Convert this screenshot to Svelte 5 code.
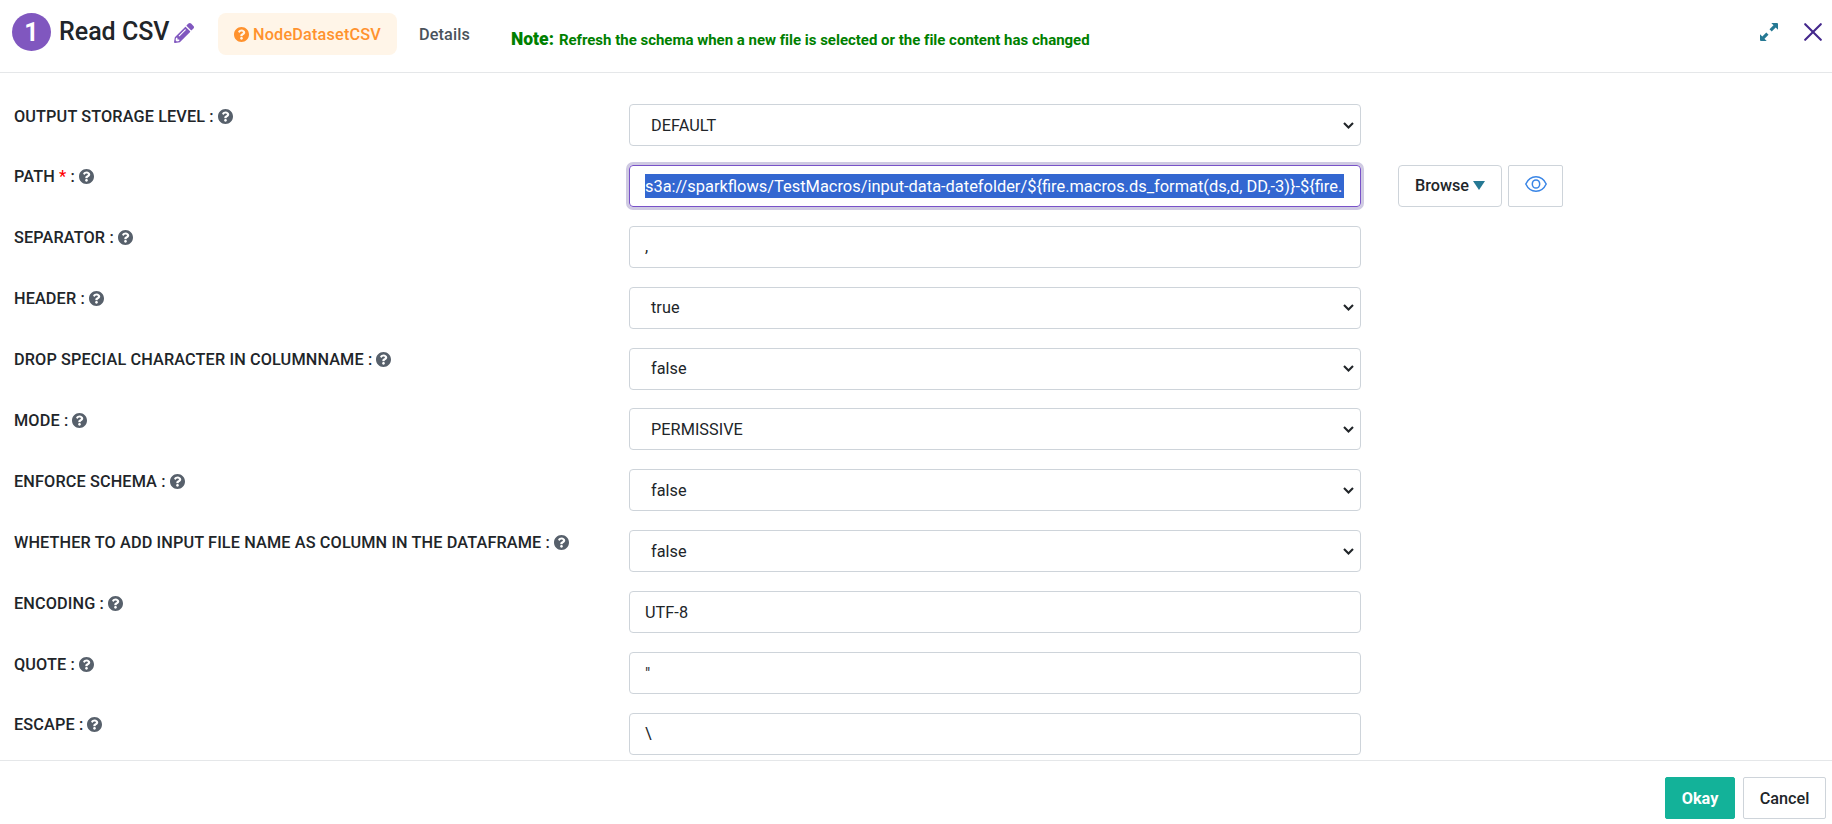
<script>
  const fields = [
    { label: 'OUTPUT STORAGE LEVEL', value: 'DEFAULT', type: 'select' },
    { label: 'PATH', value: 's3a://sparkflows/TestMacros/input-data-datefolder/${fire.macros.ds_format(ds,d, DD,-3)}-${fire.', type: 'path', required: true },
    { label: 'SEPARATOR', value: ',', type: 'text' },
    { label: 'HEADER', value: 'true', type: 'select' },
    { label: 'DROP SPECIAL CHARACTER IN COLUMNNAME', value: 'false', type: 'select' },
    { label: 'MODE', value: 'PERMISSIVE', type: 'select' },
    { label: 'ENFORCE SCHEMA', value: 'false', type: 'select' },
    { label: 'WHETHER TO ADD INPUT FILE NAME AS COLUMN IN THE DATAFRAME', value: 'false', type: 'select' },
    { label: 'ENCODING', value: 'UTF-8', type: 'text' },
    { label: 'QUOTE', value: '"', type: 'text' },
    { label: 'ESCAPE', value: '\\', type: 'text' }
  ];
</script>

{#snippet help()}
  <svg class="help" viewBox="8 8 496 496" aria-hidden="true"><path fill="currentColor" d="M504 256c0 136.997-111.043 248-248 248S8 392.997 8 256C8 119.083 119.043 8 256 8s248 111.083 248 248zM262.655 90c-54.497 0-89.255 22.957-116.549 63.758-3.536 5.286-2.353 12.415 2.715 16.258l34.699 26.31c5.205 3.947 12.621 3.008 16.665-2.122 17.864-22.658 30.113-35.797 57.303-35.797 20.429 0 45.698 13.148 45.698 32.958 0 14.976-12.363 22.667-32.534 33.976C247.128 238.528 216 254.941 216 296v4c0 6.627 5.373 12 12 12h56c6.627 0 12-5.373 12-12v-1.333c0-28.462 83.186-29.647 83.186-106.667 0-58.002-60.165-102-116.531-102zM256 338c-25.365 0-46 20.635-46 46 0 25.364 20.635 46 46 46s46-20.636 46-46c0-25.365-20.635-46-46-46z"/></svg>
{/snippet}

<div class="dialog">
  <header>
    <span class="number">1</span>
    <h1>Read CSV</h1>
    <svg class="pencil" viewBox="0 0 512 512" aria-hidden="true"><path fill="currentColor" d="M497.900 142.100l-46.100 46.100c-4.700 4.700-12.300 4.700-17 0l-111-111c-4.700-4.700-4.700-12.300 0-17l46.100-46.100c18.700-18.700 49.100-18.700 67.900 0l60.100 60.100c18.800 18.700 18.800 49.100 0 67.900zM284.200 99.800L21.600 362.400.4 483.900c-2.900 16.400 11.400 30.600 27.800 27.800l121.500-21.300 262.600-262.600c4.700-4.700 4.700-12.300 0-17l-111-111c-4.800-4.700-12.400-4.700-17.100 0zM124.100 339.900c-5.500-5.500-5.500-14.300 0-19.800l154-154c5.500-5.500 14.300-5.500 19.800 0s5.500 14.300 0 19.800l-154 154c-5.500 5.500-14.300 5.500-19.800 0zM88 424h48v36.300l-64.500 11.300-31.100-31.100L51.700 376H88v48z"/></svg>
    <div class="tab active">{@render help()}<span>NodeDatasetCSV</span></div>
    <div class="details">Details</div>
    <p class="note"><b>Note:</b><span>Refresh the schema when a new file is selected or the file content has changed</span></p>
    <svg class="expand" viewBox="0 0 18 18" aria-hidden="true"><path fill="currentColor" d="M11.300 0H17q1 0 1 1v5.700L15.700 4.500 11.700 8.500 9.500 6.300 13.500 2.300zM6.700 18H1q-1 0-1-1v-5.700l2.300 2.200 4-4 2.200 2.200-4 4z"/></svg>
    <svg class="close" viewBox="0 0 18 18" aria-hidden="true"><path stroke="currentColor" stroke-width="2.100" stroke-linecap="round" d="M1.200 1.200l15.600 15.600M16.800 1.200L1.200 16.800"/></svg>
  </header>

  <main>
    {#each fields as f}
      <div class="row">
        <div class="label"><span>{f.label}{#if f.required}<i>&nbsp;*</i>{/if} :</span>{@render help()}</div>
        <div class="field {f.type}">
          <span class="value">{f.value}</span>
          {#if f.type === 'select'}
            <svg class="caret" viewBox="0 0 11 7" aria-hidden="true"><path d="M1 1l4.500 4.500L10 1" fill="none" stroke="currentColor" stroke-width="2.100"/></svg>
          {/if}
        </div>
        {#if f.type === 'path'}
          <button class="browse"><span>Browse</span><i class="down"></i></button>
          <button class="view" aria-label="View">
            <svg viewBox="0 0 22 16" fill="none" stroke="currentColor" stroke-width="1.500" aria-hidden="true"><path d="M.8 8C3 3.300 6.600.8 11 .8S19 3.300 21.200 8C19 12.700 15.400 15.200 11 15.200S3 12.700.8 8z"/><ellipse cx="11" cy="8" rx="3.700" ry="4.100"/></svg>
          </button>
        {/if}
      </div>
    {/each}
  </main>

  <footer>
    <button class="okay">Okay</button>
    <button class="cancel">Cancel</button>
  </footer>
</div>

<style>
  .dialog {
    display: flex;
    flex-direction: column;
    height: 824px;
    overflow: hidden;
    background: #fff;
    color: #212529;
    font-family: Roboto, sans-serif;
    font-size: 16.250px;
  }
  svg { display: block; flex: none; }
  header {
    box-sizing: border-box;
    flex: none;
    display: flex;
    align-items: flex-start;
    height: 73px;
    padding: 13px 10px 0 12px;
    border-bottom: 1px solid #e5e7e9;
  }
  .number {
    width: 39px;
    height: 38px;
    border-radius: 50%;
    background: #8057bf;
    color: #fff;
    font-size: 25px;
    font-weight: 700;
    line-height: 39px;
    text-align: center;
  }
  h1 {
    width: 113px;
    margin: 0 0 0 8px;
    font-size: 25px;
    font-weight: 500;
    line-height: 38px;
    white-space: nowrap;
  }
  .pencil { width: 20px; height: 20px; margin: 10px 1px 0 2px; color: #8057bf; }
  .help { width: 15px; height: 15px; color: #57606b; }
  .tab {
    box-sizing: border-box;
    display: flex;
    align-items: center;
    gap: 4px;
    width: 179px;
    height: 42px;
    margin-left: 23px;
    padding-left: 16px;
    border-radius: 8px;
    background: #fff5e8;
    color: #ff922e;
    font-weight: 500;
    letter-spacing: 0.170px;
  }
  .tab .help { color: #ff922e; }
  .details {
    width: 92px;
    margin-left: 22px;
    color: #4b535b;
    font-weight: 500;
    letter-spacing: 0.120px;
    line-height: 43px;
  }
  .note {
    flex: 1;
    display: flex;
    align-items: baseline;
    gap: 5px;
    margin: 13px 0 0;
    color: #008000;
    font-size: 15px;
    font-weight: 700;
    letter-spacing: -0.010px;
    line-height: 26px;
    white-space: nowrap;
  }
  .note b { font-size: 17.500px; }
  .expand { width: 18px; height: 18px; margin-top: 10px; color: #267994; }
  .close { width: 18px; height: 18px; margin: 10px 0 0 26px; color: #44288c; }

  main { flex: 1; min-height: 0; overflow: hidden; padding: 31px 0 0 14px; }
  .row { display: flex; align-items: flex-start; height: 60.900px; }
  .label {
    display: flex;
    align-items: center;
    gap: 4px;
    width: 615px;
    height: 24px;
    font-weight: 500;
    letter-spacing: 0.130px;
    white-space: nowrap;
  }
  .label i { color: #f00; font-style: normal; }
  .field {
    box-sizing: border-box;
    display: flex;
    align-items: center;
    width: 732px;
    height: 42px;
    padding: 0 15px;
    border: 1px solid #ced4da;
    border-radius: 4px;
    letter-spacing: 0.050px;
  }
  .field.select { justify-content: space-between; padding: 0 6px 0 21px; }
  .field.path { padding-right: 16px; border-color: #7952c8; box-shadow: 0 0 0 3px #cfcae2; }
  .path .value {
    flex: 1;
    height: 24px;
    background: #3367d1;
    color: #fff;
    font-size: 16.420px;
    letter-spacing: normal;
    line-height: 25px;
    white-space: nowrap;
  }
  .caret { width: 11px; height: 7px; }
  button {
    box-sizing: border-box;
    display: flex;
    align-items: center;
    justify-content: center;
    height: 42px;
    padding: 0;
    border: 1px solid #ced4da;
    border-radius: 4px;
    background: #fff;
    color: #212529;
    font: 500 16.250px Roboto, sans-serif;
  }
  .browse { width: 104px; margin-left: 37px; gap: 4px; }
  .down { border: 6px solid transparent; border-top: 9px solid #267994; border-bottom: 0; }
  .view { width: 55px; margin-left: 6px; padding-bottom: 4px; border-radius: 2px; color: #3985e6; }
  .view svg { width: 22px; height: 16px; }
  footer {
    box-sizing: border-box;
    flex: none;
    display: flex;
    justify-content: flex-end;
    gap: 8px;
    height: 64px;
    padding: 16px 6px 0;
    border-top: 1px solid #e5e7e9;
  }
  footer button { border-radius: 2px; }
  .okay { width: 70px; border-color: #13b299; background: #13b299; color: #fff; font-weight: 700; }
  .cancel { width: 83px; }
</style>
